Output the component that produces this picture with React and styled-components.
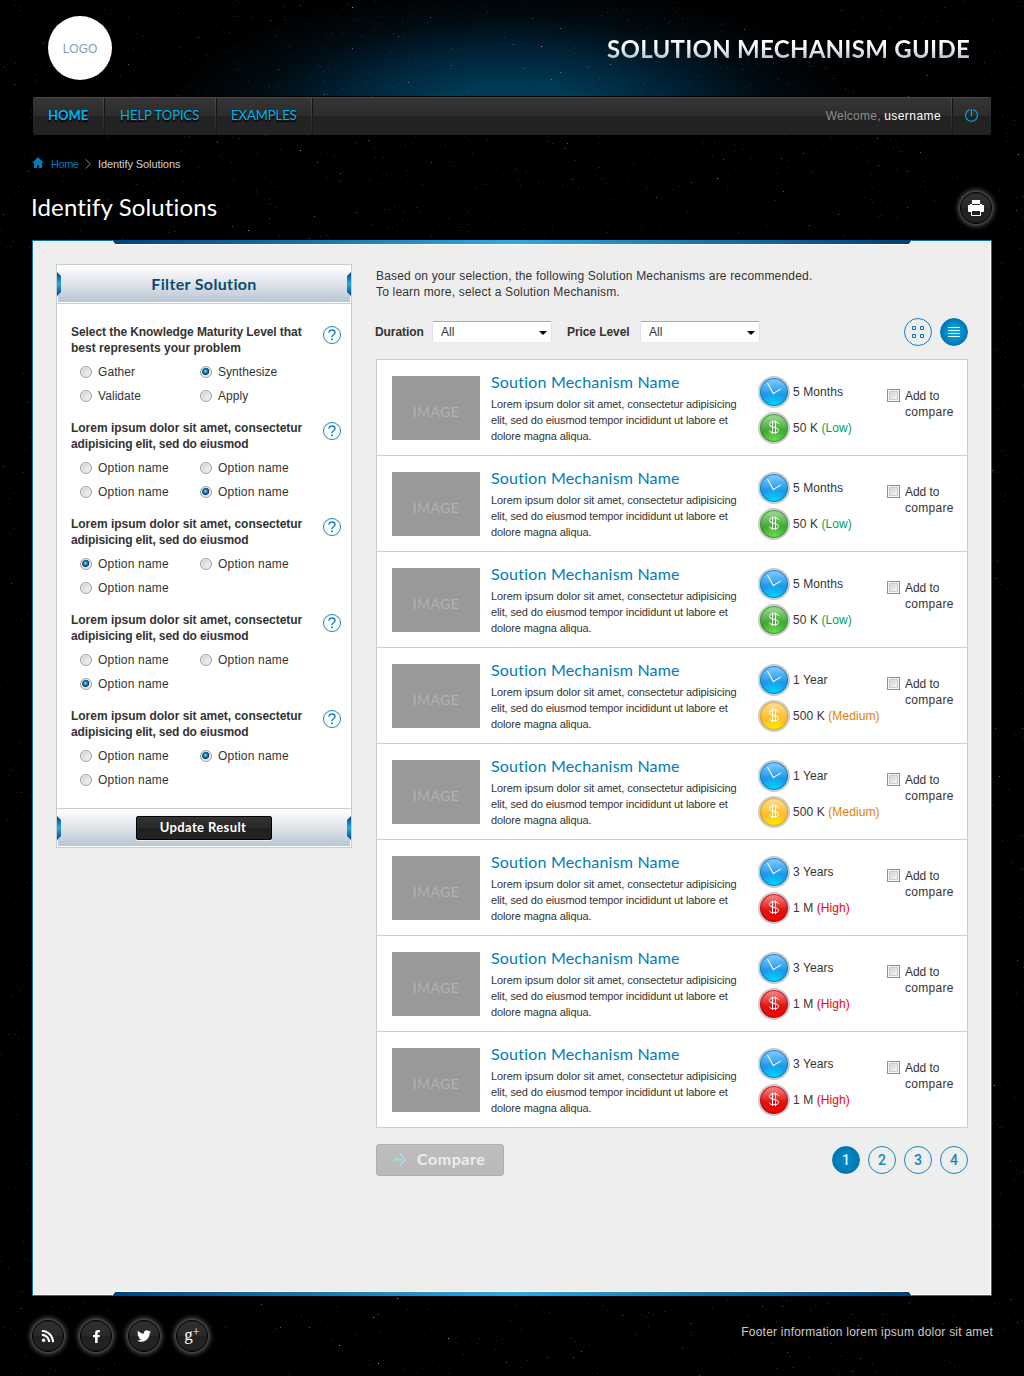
import React from 'react';
import styled, { createGlobalStyle, css } from 'styled-components';
import { FaRss, FaFacebookF, FaTwitter } from 'react-icons/fa';

const body = '"Liberation Sans", Arial, sans-serif';
const display = 'Lato, "Open Sans", sans-serif';

const GlobalStyle = createGlobalStyle`
  * { box-sizing: border-box; }
  body { margin: 0; background: #000; font-family: ${body}; font-size: 12px; line-height: 16px; color: #333; }
  h1, h2, h3, p, ul { margin: 0; padding: 0; font-weight: 400; list-style: none; }
  a { text-decoration: none; }
  button { margin: 0; padding: 0; border: 0; background: none; cursor: pointer; }
`;

const Page = styled.div`
  position: relative;
  width: 1024px;
  height: 1376px;
  overflow: hidden;
  background:
    radial-gradient(ellipse 350px 135px at 512px 120px, #00415f 0%, #003a55 25%, #00253a 48%, #000b12 75%, #000 100%) 0 0 / 1024px 96px no-repeat,
    #000;
`;
const Sky = styled.svg`
  position: absolute;
  inset: 0;
  pointer-events: none;
`;
const Shell = styled.div`
  position: relative;
  width: 960px;
  margin: 0 auto;
`;

const Header = styled.header`
  display: flex;
  align-items: center;
  justify-content: space-between;
  height: 96px;
  padding: 0 22px 0 16px;
`;
const Logo = styled.div`
  display: flex;
  align-items: center;
  justify-content: center;
  width: 64px;
  height: 64px;
  padding-top: 2px;
  border-radius: 50%;
  background: #fff;
  color: #7f9fb4;
`;
const SiteTitle = styled.h1`
  font: 700 24px/30px ${display};
  letter-spacing: 0.27px;
  background: linear-gradient(#fff 30%, #f1f4f8 48%, #b4c4d4 82%);
  background-clip: text;
  -webkit-background-clip: text;
  color: transparent;
  padding-top: 1px;
`;

const Nav = styled.nav`
  display: flex;
  height: 38px;
  margin: 1px 1px 0;
  border-radius: 2px;
  border-top: 1px solid #484848;
  background: linear-gradient(#353535 0, #2c2c2c 18px, #222 18px, #232323 100%);
  font: 400 13px/35px ${display};
`;
const Divider = styled.span`
  flex: none;
  width: 2px;
  background:
    linear-gradient(#4a4a4a, #222) left / 1px 100% no-repeat,
    linear-gradient(#111, #1c1c1c) right / 1px 100% no-repeat;
`;
const NavLink = styled.a`
  width: ${p => p.$w}px;
  padding-left: ${p => p.$pad || 14}px;
  color: #00b4f0;
  text-shadow: 0 2px 1px #000;
  font-weight: ${p => (p.$active ? 700 : 400)};
`;
const Welcome = styled.span`
  margin-left: auto;
  padding-right: 10px;
  font: 12px/37px ${body};
  letter-spacing: 0.23px;
  color: #8c8c8c;
  b { font-weight: 400; color: #fff; letter-spacing: 0.42px; }
`;
const PowerButton = styled.button`
  display: flex;
  align-items: center;
  justify-content: center;
  width: 38px;
  padding: 0 2px 2px 0;
`;

const Crumbs = styled.div`
  display: flex;
  align-items: center;
  height: 16px;
  margin-top: 21px;
  font-size: 11px;
  svg { flex: none; }
  a { width: 34px; margin-left: 7px; color: #007cb8; letter-spacing: -0.45px; }
  span { margin-left: 7px; color: #d0d0d0; letter-spacing: -0.08px; }
`;
const HomeGlyph = styled.svg`
  margin-top: -3px;
`;

const TitleRow = styled.div`
  display: flex;
  align-items: center;
  justify-content: space-between;
  height: 32px;
  margin-top: 20px;
`;
const PageTitle = styled.h2`
  margin: -2px 0 0 -1px;
  font: 400 24px/32px ${display};
  letter-spacing: 0.14px;
  color: #fff;
`;
const RoundButton = styled.button`
  display: flex;
  align-items: center;
  justify-content: center;
  width: 32px;
  height: 32px;
  border-radius: 50%;
  border: 1px solid #0a0a0a;
  background: linear-gradient(#303030 0, #2a2a2a 50%, #222 50%, #222 100%);
  box-shadow: 0 0 0 1px #454545, 0 0 5px 2px #555;
  color: #fff;
`;

const Panel = styled.main`
  position: relative;
  display: flex;
  align-items: flex-start;
  gap: 24px;
  height: 1056px;
  margin-top: 16px;
  padding: 22px 23px;
  border: 1px solid #0673ac;
  outline: 1px solid #fff;
  outline-offset: -2px;
  background: #eee;
`;
const Edge = styled.i`
  position: absolute;
  left: 79px;
  width: 800px;
  height: 5px;
  background: #fff;
  &::after {
    content: '';
    position: absolute;
    left: 0;
    right: 0;
    height: 4px;
    background: linear-gradient(90deg, #00427a, #2ea9df 50%, #003e74);
  }
  ${p => p.$bottom
    ? css`
        bottom: -1px;
        &::after { bottom: 0; clip-path: polygon(3px 0, calc(100% - 3px) 0, 100% 100%, 0 100%); }
        clip-path: polygon(4px 0, calc(100% - 4px) 0, 100% 100%, 0 100%);
      `
    : css`
        top: -1px;
        &::after { top: 0; clip-path: polygon(0 0, 100% 0, calc(100% - 3px) 100%, 3px 100%); }
        clip-path: polygon(0 0, 100% 0, calc(100% - 4px) 100%, 4px 100%);
      `}
`;

const Sidebar = styled.aside`
  width: 296px;
  margin-top: 1px;
  border: 1px solid #ccc;
  background: #fff;
`;
const SideBar = styled.div`
  position: relative;
  display: flex;
  align-items: center;
  justify-content: center;
  height: 38px;
  border: solid #fff;
  border-width: 0 1px 1px;
  background: linear-gradient(#fefefe, #dfe4ea 50%, #b8c6d4);
  &::before, &::after {
    content: '';
    position: absolute;
    top: 7px;
    width: 4px;
    height: 24px;
    background: linear-gradient(#00457d, #2ba6dc 50%, #00457d);
  }
  &::before { left: -1px; clip-path: polygon(0 0, 100% 4px, 100% 20px, 0 100%); }
  &::after { right: -1px; clip-path: polygon(100% 0, 0 4px, 0 20px, 100% 100%); }
`;
const SideTitle = styled.h3`
  font: 700 16px/20px ${display};
  letter-spacing: 0.35px;
  color: #0d4a70;
`;
const Groups = styled.div`
  display: flex;
  flex-direction: column;
  gap: 12px;
  padding: 20px 9px 16px 14px;
  border: solid #ccc;
  border-width: 1px 0;
`;
const Group = styled.section`
  display: grid;
  grid-template-columns: 1fr 20px;
`;
const Question = styled.p`
  font-weight: 700;
  letter-spacing: ${p => p.$ls || '-0.02px'};
  white-space: nowrap;
`;
const HelpButton = styled.button`
  width: 20px;
  height: 20px;
  margin: 1px 0 0;
`;
const Options = styled.div`
  grid-column: 1 / -1;
  display: grid;
  grid-template-columns: 120px 120px;
  grid-auto-rows: 24px;
  margin-top: 4px;
  padding-left: 9px;
`;
const Option = styled.label`
  display: flex;
  align-items: center;
  gap: 6px;
  letter-spacing: ${p => (p.$tight ? 0.06 : 0.2)}px;
`;
const Radio = styled.i`
  position: relative;
  width: 12px;
  height: 12px;
  border: 1px solid #9b9c9c;
  border-radius: 50%;
  background: radial-gradient(circle at 65% 65%, #f0f0f0, #d2d5da 75%);
  box-shadow: inset 0 0 0 1px #f0f0f0;
  ${p => p.$on && css`
    background: radial-gradient(circle at 45% 42%, #8fdcf8 0, #1a86bd 1.8px, #0a3558 3.4px, #dfe1e4 4px);
  `}
`;
const UpdateButton = styled.button`
  width: 136px;
  height: 24px;
  border: 1px solid #000;
  border-radius: 2px;
  background: linear-gradient(#333 0, #282828 50%, #202020 50%, #242424);
  box-shadow: 0 1px 0 #e8edf2;
  font: 700 13px/20px ${display};
  letter-spacing: 0.38px;
  color: #fff;
  padding: 0 2px 2px 0;
`;

const Content = styled.div`
  width: 592px;
`;
const Intro = styled.p`
  margin-top: 5px;
  letter-spacing: 0.18px;
`;
const Toolbar = styled.div`
  display: flex;
  align-items: center;
  height: 28px;
  margin: 18px 0 13px;
`;
const FieldLabel = styled.label`
  width: ${p => p.$w}px;
  margin-left: ${p => p.$ml}px;
  font-weight: 700;
  letter-spacing: -0.08px;
`;
const Select = styled.div`
  display: flex;
  align-items: center;
  justify-content: space-between;
  width: 120px;
  height: 22px;
  padding: 0 4px 0 8px;
  border: 1px solid #e2e3ea;
  border-top-color: #abadb3;
  border-bottom-color: #e3e9ef;
  border-radius: 2px;
  background: #fff;
  &::after {
    content: '';
    margin-top: 2px;
    border: solid transparent;
    border-width: 4px 4px 0;
    border-top-color: #000;
  }
`;
const Views = styled.div`
  display: flex;
  gap: 8px;
  margin-left: auto;
`;
const Circle = styled.button`
  display: flex;
  align-items: center;
  justify-content: center;
  width: 28px;
  height: 28px;
  border: 1px solid #1784bb;
  border-radius: 50%;
  font: 500 14px/26px Roboto, sans-serif;
  color: #1784bb;
  ${p => p.$on && css`
    border-color: #0079b3;
    background: radial-gradient(circle, ${p.$glow || '#0092cc'} 0, #0079b3 70%);
    color: #d9f3ff;
  `}
`;

const List = styled.ul`
  border: 1px solid #ccc;
  background: #fff;
`;
const Item = styled.li`
  display: flex;
  height: 96px;
  padding: 16px 0 0 15px;
  border-bottom: 1px solid #ccc;
  &:last-child { height: 95px; border: 0; }
`;
const Thumb = styled.div`
  flex: none;
  width: 88px;
  height: 64px;
  padding-top: 8px;
  background: #999;
  color: #b2b2b2;
  font: 400 14px/56px ${display};
  letter-spacing: 0.4px;
  text-align: center;
`;
const Info = styled.div`
  width: 267px;
  margin-left: 11px;
  font-size: 11px;
  white-space: nowrap;
`;
const Name = styled.a`
  display: block;
  height: 20px;
  margin: -4px 0 4px;
  font: 400 16px/20px ${display};
  letter-spacing: 0.2px;
  color: #007cb5;
`;
const Line = styled.p`
  letter-spacing: ${p => p.$ls}px;
`;
const Facts = styled.div`
  display: flex;
  flex-direction: column;
  gap: 4px;
  width: 129px;
`;
const Fact = styled.div`
  display: flex;
  align-items: center;
  gap: 3px;
  height: 32px;
  letter-spacing: 0.08px;
  white-space: nowrap;
`;
const Level = styled.span`
  color: ${p => p.$c};
  letter-spacing: 0.1px;
`;
const tones = {
  blue: ['#8ccdff', '#1b9be8', '#00d2fa', '#0a6cc0'],
  green: ['#a9dc9a', '#45a838', '#66dc44', '#2c8a22'],
  amber: ['#ffe39a', '#fbbd2c', '#ffec00', '#d8960c'],
  red: ['#ff8c8c', '#dc1414', '#f40000', '#b00606'],
};
const Badge = styled.i`
  display: flex;
  flex: none;
  align-items: center;
  justify-content: center;
  width: 32px;
  height: 32px;
  border: 2px solid #cbcbcb;
  border-radius: 50%;
  background: ${p => {
    const [a, b, c] = tones[p.$tone];
    return `radial-gradient(ellipse 15px 12px at 50% 96%, ${c} 10%, ${c}00), linear-gradient(${a}, ${b} 58%, ${b})`;
  }};
  box-shadow: inset 0 0 0 1px ${p => tones[p.$tone][3]}99, inset 0 0 2px ${p => tones[p.$tone][3]};
`;
const CompareLabel = styled.label`
  display: flex;
  gap: 5px;
  margin-top: 12px;
  letter-spacing: 0.3px;
  span { letter-spacing: -0.05px; }
`;
const Checkbox = styled.i`
  width: 13px;
  height: 13px;
  margin-top: 1px;
  border: 1px solid #8e8f8f;
  background: linear-gradient(135deg, #c9cdd3, #f4f4f4 80%);
  box-shadow: inset 0 0 0 1px #f4f4f4, inset 0 0 0 2px #c8cbd0;
`;

const Actions = styled.div`
  display: flex;
  align-items: center;
  justify-content: space-between;
  margin-top: 16px;
`;
const CompareButton = styled.button`
  display: flex;
  align-items: center;
  gap: 10px;
  width: 128px;
  height: 32px;
  padding: 0 0 2px 17px;
  border: 1px solid #afafaf;
  border-radius: 3px;
  background: linear-gradient(#bebebe, #b9b9b9);
  font: 700 16px/28px ${display};
  letter-spacing: 0.55px;
  color: #eee;
  svg { margin-top: 1px; }
`;

const Footer = styled.footer`
  display: flex;
  justify-content: space-between;
  margin: 24px 0 0;
  color: #ccc;
  letter-spacing: 0.23px;
  p { margin: 4px -1px 0 0; }
`;
const Social = styled.div`
  display: flex;
  gap: 16px;
`;
const GPlus = styled.span`
  display: flex;
  height: 20px;
  font: 17px/17px "Liberation Serif", serif;
  sup { font-size: 12px; line-height: 12px; vertical-align: baseline; }
`;

function buildStars(count, seed) {
  let s = seed;
  const rnd = () => {
    s = (s + 0x6d2b79f5) | 0;
    let t = Math.imul(s ^ (s >>> 15), 1 | s);
    t = (t + Math.imul(t ^ (t >>> 7), 61 | t)) ^ t;
    return ((t ^ (t >>> 14)) >>> 0) / 4294967296;
  };
  let d = '';
  for (let i = 0; i < count; i += 1) {
    d += `M${Math.floor(rnd() * 1024)} ${Math.floor(rnd() * 1376)}h1v1h-1z`;
  }
  return d;
}
const starLayers = [
  { d: buildStars(5600, 11), o: 0.1 },
  { d: buildStars(1300, 97), o: 0.18 },
  { d: buildStars(300, 389), o: 0.36 },
  { d: buildStars(70, 733), o: 0.6 },
];

const PowerIcon = () => (
  <svg width="15" height="15" viewBox="0 0 15 15" fill="none" stroke="#00a5e0" strokeWidth="1.2">
    <path d="M5.7 1.6a6 6 0 1 0 3.6 0M7.5 1v7.5" />
  </svg>
);
const HomeIcon = () => (
  <HomeGlyph width="12" height="12" viewBox="0 0 12 12" fill="#007cb8">
    <path d="M6 0l6 6h-2v5H7V8H5v3H2V6H0z" />
  </HomeGlyph>
);
const Chevron = () => (
  <svg width="6" height="10" viewBox="0 0 6 10" fill="none" stroke="#6c8ca0">
    <path d="M.7.5L5.2 5 .7 9.5" />
  </svg>
);
const PrintIcon = () => (
  <svg width="16" height="16" viewBox="0 0 16 16">
    <path fill="#fff" d="M4 0h8v4H4zM1 5h1V4h2v1h8V4h2v1h1q1 0 1 1v5q0 1-1 1H1q-1 0-1-1V6q0-1 1-1z" />
    <path fill="#222" stroke="#fff" d="M3.500 10.500h9v5h-9z" />
  </svg>
);
const HelpIcon = () => (
  <svg width="20" height="20" viewBox="0 0 20 20" fill="none" stroke="#1784bb">
    <circle cx="10" cy="10" r="8.500" />
    <path d="M7 7.800c0-1.900 1.300-2.800 3-2.800s3 1 3 2.500c0 2.200-3 2.200-3 4.700" strokeWidth="1.400" />
    <path d="M10 13.500v1.800" strokeWidth="1.800" />
  </svg>
);
const GridIcon = () => (
  <svg width="12" height="12" viewBox="0 0 12 12" fill="none" stroke="#0079b3">
    <path d="M.5.5h3v3h-3zM8.500.5h3v3h-3zM.5 8.500h3v3h-3zM8.500 8.500h3v3h-3z" />
  </svg>
);
const ListIcon = () => (
  <svg width="12" height="12" viewBox="0 0 12 12" stroke="#e8f8ff">
    <path d="M0 1.500h12M0 4.500h12M0 7.500h12M0 10.500h12" />
  </svg>
);
const ClockIcon = () => (
  <svg width="28" height="28" viewBox="0 0 28 28" fill="none" stroke="#e2f6ff" strokeWidth="1.200">
    <path d="M7.500 5l5.800 10.500L21 11" />
    <circle cx="13.300" cy="15.300" r=".9" fill="#e2f6ff" stroke="none" />
  </svg>
);
const DollarIcon = () => (
  <svg width="28" height="28" viewBox="0 0 28 28" fill="none" stroke="#fff">
    <path d="M18.500 9.800c-.3-1.200-1.600-1.900-4.500-1.900s-4.500.8-4.500 2.600c0 3.700 9 2.200 9 5.800 0 1.700-1.500 2.400-4.500 2.400s-4.300-.7-4.500-2.100M12.500 6.500v13.500M15.500 6.500v13.500" />
  </svg>
);
const ArrowIcon = () => (
  <svg width="13" height="11" viewBox="0 0 13 11" fill="#a5dbf0">
    <path d="M0 4.500h8v2H0zM6 0h2v2H6zM8 2h2v2H8zM10 4h2v3h-2zM8 7h2v2H8zM6 9h2v2H6z" />
  </svg>
);

const lorem = ['Lorem ipsum dolor sit amet, consectetur', 'adipisicing elit, sed do eiusmod'];
const O = 'Option name';
const groups = [
  { q: ['Select the Knowledge Maturity Level that', 'best represents your problem'], ls: '-0.07px', options: ['Gather', 'Synthesize', 'Validate', 'Apply'], on: 1 },
  { q: lorem, options: [O, O, O, O], on: 3 },
  { q: lorem, options: [O, O, O], on: 0 },
  { q: lorem, options: [O, O, O], on: 2 },
  { q: lorem, options: [O, O, O], on: 1 },
];
const low = { time: '5 Months', price: '50 K', level: '(Low)', tone: 'green', color: '#00a054' };
const medium = { time: '1 Year', price: '500 K', level: '(Medium)', tone: 'amber', color: '#e67e00' };
const high = { time: '3 Years', price: '1 M', level: '(High)', tone: 'red', color: '#f00000' };
const results = [low, low, low, medium, medium, high, high, high];

export default function App() {
  return (
    <Page>
      <GlobalStyle />
      <Sky width="1024" height="1376" fill="#fff" shapeRendering="crispEdges">
        {starLayers.map(l => <path key={l.o} d={l.d} fillOpacity={l.o} />)}
      </Sky>
      <Shell>
        <Header>
          <Logo>LOGO</Logo>
          <SiteTitle>SOLUTION MECHANISM GUIDE</SiteTitle>
        </Header>
        <Nav>
          <NavLink href="#" $w={70} $pad={15} $active>HOME</NavLink>
          <Divider />
          <NavLink href="#" $w={110} $pad={15}>HELP TOPICS</NavLink>
          <Divider />
          <NavLink href="#" $w={94}>EXAMPLES</NavLink>
          <Divider />
          <Welcome>Welcome, <b>username</b></Welcome>
          <Divider />
          <PowerButton aria-label="Log out"><PowerIcon /></PowerButton>
        </Nav>
        <Crumbs>
          <HomeIcon />
          <a href="#">Home</a>
          <Chevron />
          <span>Identify Solutions</span>
        </Crumbs>
        <TitleRow>
          <PageTitle>Identify Solutions</PageTitle>
          <RoundButton aria-label="Print"><PrintIcon /></RoundButton>
        </TitleRow>
        <Panel>
          <Edge />
          <Edge $bottom />
          <Sidebar>
            <SideBar><SideTitle>Filter Solution</SideTitle></SideBar>
            <Groups>
              {groups.map((g, i) => (
                <Group key={i}>
                  <div>
                    <Question $ls={g.ls}>{g.q[0]}</Question>
                    <Question $ls={g.ls ? '0.02px' : '-0.12px'}>{g.q[1]}</Question>
                  </div>
                  <HelpButton aria-label="Help"><HelpIcon /></HelpButton>
                  <Options>
                    {g.options.map((o, j) => (
                      <Option key={j} $tight={o !== O}><Radio $on={j === g.on} />{o}</Option>
                    ))}
                  </Options>
                </Group>
              ))}
            </Groups>
            <SideBar><UpdateButton>Update Result</UpdateButton></SideBar>
          </Sidebar>
          <Content>
            <Intro>
              Based on your selection, the following Solution Mechanisms are recommended.<br />
              To learn more, select a Solution Mechanism.
            </Intro>
            <Toolbar>
              <FieldLabel $w={57} $ml={-1}>Duration</FieldLabel>
              <Select>All</Select>
              <FieldLabel $w={73} $ml={15}>Price Level</FieldLabel>
              <Select>All</Select>
              <Views>
                <Circle aria-label="Grid view"><GridIcon /></Circle>
                <Circle aria-label="List view" $on $glow="#00b4f0"><ListIcon /></Circle>
              </Views>
            </Toolbar>
            <List>
              {results.map((r, i) => (
                <Item key={i}>
                  <Thumb>IMAGE</Thumb>
                  <Info>
                    <Name href="#">Soution Mechanism Name</Name>
                    <Line $ls={-0.09}>Lorem ipsum dolor sit amet, consectetur adipisicing</Line>
                    <Line $ls={-0.12}>elit, sed do eiusmod tempor incididunt ut labore et</Line>
                    <Line $ls={-0.12}>dolore magna aliqua.</Line>
                  </Info>
                  <Facts>
                    <Fact><Badge $tone="blue"><ClockIcon /></Badge>{r.time}</Fact>
                    <Fact>
                      <Badge $tone={r.tone}><DollarIcon /></Badge>
                      <span>{r.price} <Level $c={r.color}>{r.level}</Level></span>
                    </Fact>
                  </Facts>
                  <CompareLabel>
                    <Checkbox />
                    <div><span>Add to</span><br />compare</div>
                  </CompareLabel>
                </Item>
              ))}
            </List>
            <Actions>
              <CompareButton><ArrowIcon />Compare</CompareButton>
              <Views>
                {[1, 2, 3, 4].map(n => <Circle key={n} $on={n === 1}>{n}</Circle>)}
              </Views>
            </Actions>
          </Content>
        </Panel>
        <Footer>
          <Social>
            <RoundButton aria-label="RSS"><FaRss size={14} /></RoundButton>
            <RoundButton aria-label="Facebook"><FaFacebookF size={13} /></RoundButton>
            <RoundButton aria-label="Twitter"><FaTwitter size={14} /></RoundButton>
            <RoundButton aria-label="Google Plus"><GPlus>g<sup>+</sup></GPlus></RoundButton>
          </Social>
          <p>Footer information lorem ipsum dolor sit amet</p>
        </Footer>
      </Shell>
    </Page>
  );
}
